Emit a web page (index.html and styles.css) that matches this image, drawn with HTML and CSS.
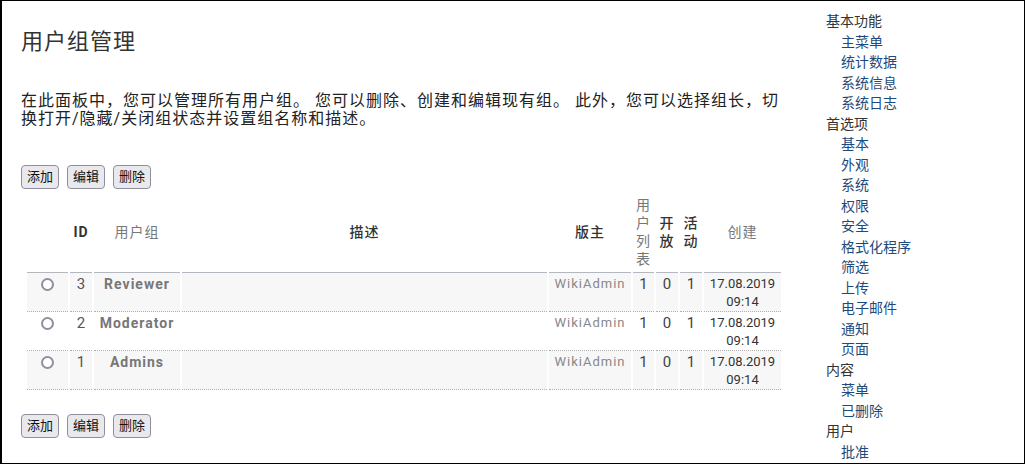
FILE: index.html
```html
<!DOCTYPE html>
<html lang="zh-CN">
<head>
<meta charset="utf-8">
<title>用户组管理</title>
<link rel="stylesheet" href="styles.css">
</head>
<body>
<div class="frame">
  <main class="main">
    <h1 class="title">用户组管理</h1>
    <p class="intro">在此面板中，您可以管理所有用户组。 您可以删除、创建和编辑现有组。 此外，您可以选择组长，切换打开/隐藏/关闭组状态并设置组名称和描述。</p>
    <div class="actions">
      <button class="btn" type="button">添加</button>
      <button class="btn" type="button">编辑</button>
      <button class="btn" type="button">删除</button>
    </div>
    <table class="groups">
      <colgroup>
        <col class="c-sel"><col class="c-id"><col class="c-name"><col class="c-desc"><col class="c-mod"><col class="c-list"><col class="c-flag"><col class="c-flag"><col class="c-date">
      </colgroup>
      <thead>
        <tr>
          <th></th>
          <th class="h-id">ID</th>
          <th class="h-link">用户组</th>
          <th class="h-strong">描述</th>
          <th class="h-strong">版主</th>
          <th class="h-link">用户列表</th>
          <th class="h-strong">开放</th>
          <th class="h-strong">活动</th>
          <th class="h-link">创建</th>
        </tr>
      </thead>
      <tbody>
        <tr>
          <td><input class="radio" type="radio" name="group"></td>
          <td class="id">3</td>
          <td class="name">Reviewer</td>
          <td></td>
          <td class="mod">WikiAdmin</td>
          <td class="num">1</td>
          <td class="num">0</td>
          <td class="num">1</td>
          <td class="date">17.08.2019<br>09:14</td>
        </tr>
        <tr>
          <td><input class="radio" type="radio" name="group"></td>
          <td class="id">2</td>
          <td class="name">Moderator</td>
          <td></td>
          <td class="mod">WikiAdmin</td>
          <td class="num">1</td>
          <td class="num">0</td>
          <td class="num">1</td>
          <td class="date">17.08.2019<br>09:14</td>
        </tr>
        <tr>
          <td><input class="radio" type="radio" name="group"></td>
          <td class="id">1</td>
          <td class="name">Admins</td>
          <td></td>
          <td class="mod">WikiAdmin</td>
          <td class="num">1</td>
          <td class="num">0</td>
          <td class="num">1</td>
          <td class="date">17.08.2019<br>09:14</td>
        </tr>
      </tbody>
    </table>
    <div class="actions actions-bottom">
      <button class="btn" type="button">添加</button>
      <button class="btn" type="button">编辑</button>
      <button class="btn" type="button">删除</button>
    </div>
  </main>
  <aside class="sidebar">
    <ul class="nav">
      <li class="sec">基本功能
        <ul>
          <li><a href="#">主菜单</a></li>
          <li><a href="#">统计数据</a></li>
          <li><a href="#">系统信息</a></li>
          <li><a href="#">系统日志</a></li>
        </ul>
      </li>
      <li class="sec">首选项
        <ul>
          <li><a href="#">基本</a></li>
          <li><a href="#">外观</a></li>
          <li><a href="#">系统</a></li>
          <li><a href="#">权限</a></li>
          <li><a href="#">安全</a></li>
          <li><a href="#">格式化程序</a></li>
          <li><a href="#">筛选</a></li>
          <li><a href="#">上传</a></li>
          <li><a href="#">电子邮件</a></li>
          <li><a href="#">通知</a></li>
          <li><a href="#">页面</a></li>
        </ul>
      </li>
      <li class="sec">内容
        <ul>
          <li><a href="#">菜单</a></li>
          <li><a href="#">已删除</a></li>
        </ul>
      </li>
      <li class="sec">用户
        <ul>
          <li><a href="#">批准</a></li>
        </ul>
      </li>
    </ul>
  </aside>
</div>
</body>
</html>
```

FILE: styles.css
```css
* {
  box-sizing: border-box;
}

html,
body {
  margin: 0;
  padding: 0;
  background: #fff;
}

body {
  font-family: Roboto, "Noto Sans CJK SC", sans-serif;
  color: #222;
}

.frame {
  display: flex;
  width: 1025px;
  height: 464px;
  border: 1px solid #000;
  border-left-width: 2px;
  overflow: hidden;
}

.main {
  flex: none;
  width: 782px;
  padding-left: 19px;
}

.title {
  margin: 28px 0 0;
  font-size: 22px;
  line-height: 26px;
  font-weight: 400;
  letter-spacing: 1px;
  color: #333;
}

.intro {
  margin: 37px 0 0;
  font-size: 16px;
  line-height: 18px;
  letter-spacing: 1px;
  color: #222;
}

.actions {
  display: flex;
  gap: 8px;
  margin-top: 37px;
}

.actions-bottom {
  margin-top: 24px;
}

.btn {
  font-family: Roboto, "Noto Sans CJK SC", sans-serif;
  font-size: 13px;
  line-height: 18px;
  height: 24px;
  padding: 2px 5px;
  color: #111;
  background: #e9e9ed;
  border: 1px solid #8f8f9d;
  border-radius: 4px;
}

.groups {
  table-layout: fixed;
  width: 758px;
  margin: 5px 0 0 4px;
  border-collapse: separate;
  border-spacing: 2px 0;
}

.c-sel { width: 41px; }
.c-id { width: 22px; }
.c-name { width: 86px; }
.c-desc { width: 365px; }
.c-mod { width: 82px; }
.c-list { width: 21px; }
.c-flag { width: 22px; }
.c-date { width: 77px; }

.groups th {
  padding: 2px 0 4px;
  font-size: 14px;
  line-height: 18px;
  letter-spacing: 1px;
  text-align: center;
  vertical-align: middle;
  border-bottom: 1px solid #b3b7c0;
}

.h-id {
  color: #333;
  font-weight: 700;
}

.h-strong {
  color: #333;
  font-weight: 500;
}

.h-link {
  color: #777;
  font-weight: 400;
}

.groups td {
  padding: 2px 0 0;
  line-height: 18px;
  text-align: center;
  vertical-align: top;
  border-bottom: 1px dotted #b0b0b0;
}

.groups tbody tr:nth-child(odd) td {
  background: #f7f7f7;
}

.radio {
  appearance: none;
  -webkit-appearance: none;
  width: 13px;
  height: 13px;
  margin: 0 1px 0 0;
  border: 2px solid #8f8f9d;
  border-radius: 50%;
  background: #fff;
  vertical-align: -2px;
}

.id {
  font-size: 15px;
  color: #555;
}

.name {
  font-size: 14px;
  font-weight: 700;
  letter-spacing: 1px;
  color: #777;
}

.mod {
  font-size: 13px;
  letter-spacing: 1px;
  color: #888;
}

.num {
  font-size: 15px;
  color: #444;
}

.date {
  font-size: 13px;
  color: #333;
}

.sidebar {
  margin-left: 42px;
  padding-top: 10px;
}

.nav,
.nav ul {
  list-style: none;
  margin: 0;
  padding: 0;
}

.nav ul {
  padding-left: 15px;
}

.nav {
  font-size: 14px;
  line-height: 20.5px;
}

.sec {
  color: #333;
}

.nav a {
  color: #1d4a7c;
  text-decoration: none;
}
```
